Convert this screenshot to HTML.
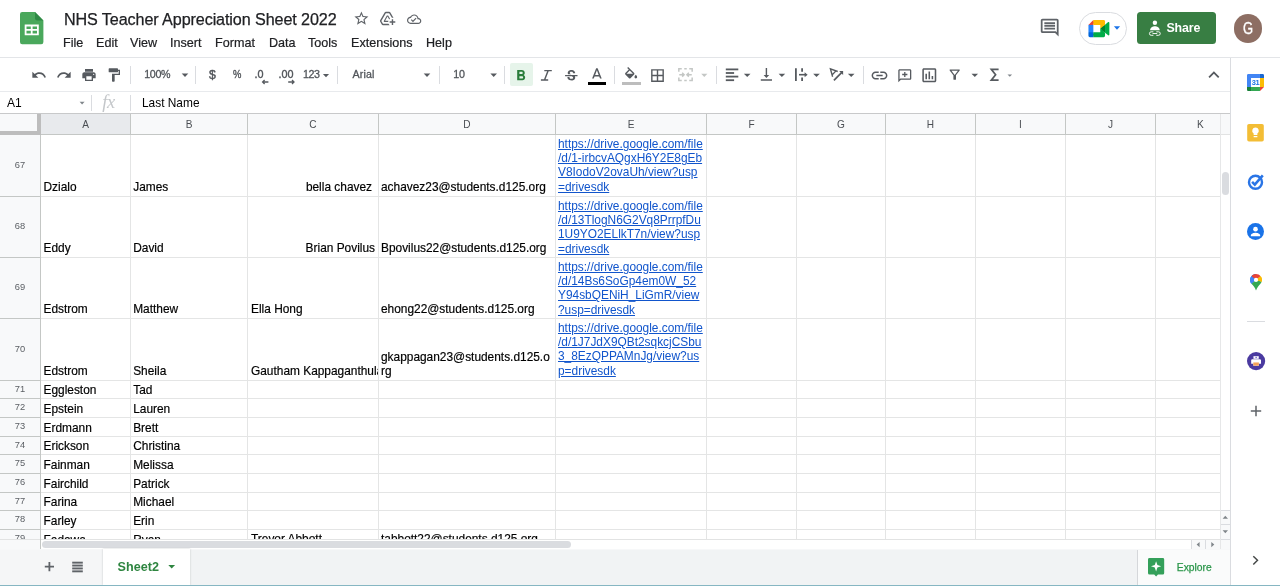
<!DOCTYPE html>
<html><head><meta charset="utf-8"><title>NHS Teacher Appreciation Sheet 2022</title>
<style>
*{box-sizing:border-box;margin:0;padding:0}
html,body{width:1280px;height:586px;overflow:hidden;background:#fff;font-family:"Liberation Sans",sans-serif;color:#000}
.a{position:absolute}
svg{position:absolute;overflow:visible}
#title{-webkit-text-stroke:0.250px #202124;left:64px;top:9px;font-size:16.15px;color:#202124;letter-spacing:-0.1px;white-space:nowrap;line-height:20px}
.menu{-webkit-text-stroke:0.200px #202124;top:35px;font-size:12.6px;color:#202124;line-height:16px;white-space:nowrap}
.hl{background:#e3e5e8;height:1px}
.tbtxt{font-size:11px;color:#4d5156;line-height:14px;top:67.0px;white-space:nowrap}
.tb2{-webkit-text-stroke:0.3px #565a5f}
.sep{width:1px;height:18px;top:66px;background:#dadce0}
.ch{top:114px;height:20px;background:#f8f9fa;border-right:1px solid #c4c7c5;font-size:10.100px;color:#4a4e53;text-align:center;line-height:22.400px}
.rh{left:0;width:40px;background:#f8f9fa;font-size:9.300px;color:#5a5e63;text-align:center}
.vl{width:1px;background:#e4e5e5;top:135px;height:404px}
.rl{height:1px;background:#e4e5e5;left:41px;width:1179px}
.c{font-size:11.9px;line-height:14px;white-space:nowrap;color:#000;-webkit-text-stroke:0.180px #000}
.lk{font-size:11.9px;line-height:14.2px;color:#1155cc;text-decoration:underline;white-space:nowrap}
</style></head><body><div id="root" style="position:absolute;left:0;top:0;width:1280px;height:586px;overflow:hidden;will-change:transform">
<!-- HEADER -->
<div id="hdr" class="a" style="left:0;top:0;width:1280px;height:57px;background:#fff"></div>
<svg style="left:20.2px;top:12.2px" width="23.4" height="32.3" viewBox="0 0 23.400 32.300">
<path d="M2.200 0H15l8.400 8.400V30.100a2.200 2.200 0 0 1-2.200 2.200H2.200A2.200 2.200 0 0 1 0 30.100V2.200A2.200 2.200 0 0 1 2.200 0z" fill="#4aa85c"/>
<path d="M15 0l8.400 8.400H17.200A2.200 2.200 0 0 1 15 6.200z" fill="#2f8a45"/>
<path d="M4.700 12.600H18.800V23.300H4.700zM6.500 14.400v2.700h4.300v-2.700zM12.600 14.400v2.700H17v-2.700zM6.500 18.800v2.700h4.300v-2.700zM12.600 18.800v2.700H17v-2.700z" fill="#fff" fill-rule="evenodd"/>
</svg>
<svg style="left:352.50px;top:10.40px" width="16.8" height="16.8" viewBox="0 0 24 24" fill="#5f6368" ><path d="M22 9.240l-7.190-.62L12 2 9.190 8.630 2 9.240l5.460 4.730L5.820 21 12 17.270 18.180 21l-1.630-7.030L22 9.240zM12 15.400l-3.760 2.270 1-4.280-3.320-2.880 4.380-.38L12 6.100l1.710 4.040 4.380.38-3.320 2.880 1 4.280L12 15.400z"/></svg>
<svg style="left:379.30px;top:10.00px" width="17" height="17" viewBox="0 0 24 24" fill="#5f6368" ><path d="M20 21v-3h3v-2h-3v-3h-2v3h-3v2h3v3h2zm-4.970.5H5.660c-.72 0-1.380-.38-1.730-1L1.570 16.400c-.36-.62-.35-1.380.01-2L7.920 3.490c.36-.61 1.020-.99 1.730-.99h4.700c.71 0 1.370.38 1.730.99l4.480 7.710c-.5-.13-1.020-.2-1.560-.2-.28 0-.56.020-.83.060L14.350 4.500h-4.700L3.310 15.410l2.350 4.090h7.890c.35.780.86 1.450 1.480 2zM13.340 15c-.22.630-.34 1.300-.34 2H7.250l-.73-1.270 4.580-7.980h1.800l2.740 4.770c-.43.310-.82.660-1.170 1.050l-2.470-4.320-3.300 5.750h4.640z"/></svg>
<svg style="left:406.95px;top:11.80px" width="14.3" height="14.3" viewBox="0 0 24 24" fill="#5f6368" ><path d="M19.350 10.040C18.670 6.590 15.640 4 12 4 9.110 4 6.600 5.640 5.350 8.040 2.340 8.360 0 10.910 0 14c0 3.310 2.690 6 6 6h13c2.760 0 5-2.240 5-5 0-2.640-2.050-4.780-4.650-4.960zM19 18H6c-2.210 0-4-1.790-4-4s1.790-4 4-4h.71C7.370 7.690 9.480 6 12 6c3.040 0 5.500 2.460 5.500 5.500v.5H19c1.660 0 3 1.340 3 3s-1.340 3-3 3zm-9-3.820l-2.090-2.090L6.500 13.500 10 17l6.010-6.010-1.410-1.410z"/></svg>
<svg style="left:1039.30px;top:17.20px" width="21.4" height="21.4" viewBox="0 0 24 24" fill="#5f6368" ><path d="M21.990 4c0-1.100-.89-2-1.990-2H4c-1.100 0-2 .9-2 2v12c0 1.100.9 2 2 2h14l4 4-.01-18zM20 4v13.170L18.830 16H4V4h16zM6 12h12v2H6zm0-3h12v2H6zm0-3h12v2H6z"/></svg>
<div class="a" style="left:1079px;top:12px;width:48px;height:32.500px;border:1px solid #dadce0;border-radius:17px;background:#fff"></div>
<svg style="left:1088.200px;top:19.800px" width="21.800" height="17.200" viewBox="0 0 87.500 72">
<path fill="#00832d" d="M49.500 36l8.530 9.750 11.470 7.330 2-17.020-2-16.640-11.690 6.440z"/>
<path fill="#0066da" d="M0 51.500V66c0 3.315 2.685 6 6 6h14.500l3-10.960-3-9.540-9.950-3z"/>
<path fill="#e94235" d="M20.500 0L0 20.500l10.550 3 9.950-3 2.950-9.410z"/>
<path fill="#2684fc" d="M20.500 20.500H0v31h20.500z"/>
<path fill="#00ac47" d="M82.600 8.680L69.500 19.420v33.660l13.160 10.790c1.970 1.540 4.850.135 4.850-2.370V11c0-2.535-2.945-3.925-4.910-2.320zM49.500 36v15.500h-29V72h43c3.315 0 6-2.685 6-6V53.080z"/>
<path fill="#ffba00" d="M63.500 0h-43v20.500h29V36l20-16.570V6c0-3.315-2.685-6-6-6z"/>
</svg>
<svg style="left:0;top:0" width="1280" height="586" viewBox="0 0 1280 586"><path d="M1113.90 26.20h6.2l-3.1 3.6z" fill="#1a73e8"/></svg>
<div class="a" style="left:1137.200px;top:12.400px;width:78.500px;height:31.700px;border-radius:3.500px;background:#387e43"></div>
<svg style="left:0;top:0" width="1280" height="586" viewBox="0 0 1280 586"><circle cx="1154.900" cy="22.700" r="2.200" fill="#fff"/><path d="M1150.100 30.300c0-2.900 2.700-4.100 4.800-4.100s4.800 1.200 4.800 4.100z" fill="#fff"/><path d="M1153.400 31.800h-2.200a1.750 1.750 0 0 0 0 3.500h2.200M1156.300 31.800h2.200a1.750 1.750 0 0 1 0 3.500h-2.200M1152.500 33.550h4.700" fill="none" stroke="#fff" stroke-width="0.950"/></svg>
<div class="a" style="left:1166.500px;top:19.500px;font-size:12.400px;line-height:16px;font-weight:bold;color:#fff;letter-spacing:-0.15px">Share</div>
<div class="a" style="left:1233.800px;top:14px;width:28.500px;height:28.500px;border-radius:50%;background:#8d6e63;color:#fff;font-size:15.800px;line-height:29.600px;text-align:center;-webkit-text-stroke:0.350px #fff"><span style="display:inline-block;transform:scaleX(0.820)">G</span></div>
<div id="title" class="a">NHS Teacher Appreciation Sheet 2022</div>
<div class="a menu" style="left:63px">File</div>
<div class="a menu" style="left:96px">Edit</div>
<div class="a menu" style="left:130px">View</div>
<div class="a menu" style="left:170px">Insert</div>
<div class="a menu" style="left:215px">Format</div>
<div class="a menu" style="left:269px">Data</div>
<div class="a menu" style="left:308px">Tools</div>
<div class="a menu" style="left:351px">Extensions</div>
<div class="a menu" style="left:426px">Help</div>
<div class="a hl" style="left:0;top:57px;width:1280px"></div>
<!-- TOOLBAR -->
<svg style="left:30.90px;top:67.00px" width="16" height="16" viewBox="0 0 24 24" fill="#565a5f" ><path d="M12.5 8c-2.65 0-5.05.99-6.9 2.6L2 7v9h9l-3.62-3.62c1.39-1.16 3.16-1.88 5.12-1.88 3.54 0 6.55 2.31 7.6 5.5l2.37-.78C21.08 11.03 17.15 8 12.5 8z"/></svg>
<svg style="left:55.90px;top:67.00px" width="16" height="16" viewBox="0 0 24 24" fill="#565a5f" ><path d="M18.4 10.6C16.55 8.99 14.15 8 11.5 8c-4.65 0-8.58 3.03-9.96 7.22L3.9 16c1.05-3.19 4.05-5.5 7.6-5.5 1.95 0 3.73.72 5.12 1.88L13 16h9V7l-3.6 3.6z"/></svg>
<svg style="left:80.90px;top:67.00px" width="16" height="16" viewBox="0 0 24 24" fill="#565a5f" ><path d="M19 8H5c-1.66 0-3 1.34-3 3v6h4v4h12v-4h4v-6c0-1.66-1.34-3-3-3zm-3 11H8v-5h8v5zm3-7c-.55 0-1-.45-1-1s.45-1 1-1 1 .45 1 1-.45 1-1 1zm-1-9H6v4h12V3z"/></svg>
<svg style="left:105.70px;top:67.00px" width="16" height="16" viewBox="0 0 24 24" fill="#565a5f" ><path d="M18 4V3c0-.55-.45-1-1-1H5c-.55 0-1 .45-1 1v4c0 .55.45 1 1 1h12c.55 0 1-.45 1-1V6h1v4H9v11c0 .55.45 1 1 1h2c.55 0 1-.45 1-1v-9h8V4h-3z"/></svg>
<div class="a sep" style="left:130px"></div>
<div class="a tbtxt tb2" style="left:144.3px;font-size:10.7px;letter-spacing:-0.4px">100%</div>
<svg style="left:0;top:0" width="1280" height="586" viewBox="0 0 1280 586"><path d="M181.70 73.50h6.6l-3.3 3.4z" fill="#565a5f"/></svg>
<div class="a sep" style="left:195px"></div>
<div class="a tbtxt tb2" style="left:209px;font-size:12.2px;top:67.5px;-webkit-text-stroke:0.45px #565a5f">$</div>
<div class="a tbtxt tb2" style="left:233px;font-size:11.2px;top:67.0px;transform:scaleX(0.84);transform-origin:0 0;-webkit-text-stroke:0.4px #565a5f">%</div>
<div class="a tbtxt tb2" style="left:254.6px;font-size:10.8px;top:67.0px;-webkit-text-stroke:0.4px #565a5f">.0</div>
<div class="a tbtxt tb2" style="left:278.5px;font-size:10.8px;top:67.0px;-webkit-text-stroke:0.4px #565a5f">.00</div>
<svg style="left:0;top:0" width="1280" height="586" viewBox="0 0 1280 586" fill="none" stroke="#565a5f" stroke-width="1.300"><path d="M268.4 82H262.6M264.6 80l-2 2 2 2"/><path d="M288.2 82H294M292 80l2 2-2 2"/></svg>
<div class="a tbtxt tb2" style="left:303px;font-size:10.7px;letter-spacing:-0.45px">123</div>
<svg style="left:0;top:0" width="1280" height="586" viewBox="0 0 1280 586"><path d="M322.90 74.05h6.2l-3.1 3.1z" fill="#565a5f"/></svg>
<div class="a sep" style="left:337px"></div>
<div class="a tbtxt tb2" style="left:352.5px;font-size:10.7px;letter-spacing:0.12px">Arial</div>
<svg style="left:0;top:0" width="1280" height="586" viewBox="0 0 1280 586"><path d="M423.70 73.50h6.6l-3.3 3.4z" fill="#565a5f"/></svg>
<div class="a sep" style="left:439px"></div>
<div class="a tbtxt tb2" style="left:453.3px;font-size:10.7px;letter-spacing:-0.2px">10</div>
<svg style="left:0;top:0" width="1280" height="586" viewBox="0 0 1280 586"><path d="M490.40 73.50h6.6l-3.3 3.4z" fill="#565a5f"/></svg>
<div class="a sep" style="left:504px"></div>
<div class="a" style="left:510px;top:63px;width:23px;height:23px;border-radius:2px;background:#e6f4ea"></div>
<svg style="left:512.00px;top:67.10px" width="17.8" height="17.8" viewBox="0 0 24 24" fill="#2a7d3b" ><path d="M15.6 10.79c.97-.67 1.65-1.77 1.65-2.79 0-2.26-1.75-4-4-4H7v14h7.04c2.09 0 3.71-1.7 3.71-3.79 0-1.52-.86-2.82-2.15-3.42zM10 6.500h3c.83 0 1.500.67 1.500 1.500s-.67 1.500-1.500 1.500h-3v-3zm3.500 9H10v-3h3.500c.83 0 1.500.67 1.500 1.500s-.67 1.500-1.500 1.500z"/></svg>
<svg style="left:0;top:0" width="1280" height="586" viewBox="0 0 1280 586" fill="none" stroke="#565a5f" stroke-width="1.450"><path d="M544.300 70.600H551.800M540.900 80H548.200M548.200 70.600L544.500 80"/></svg>
<svg style="left:562.80px;top:68.20px" width="16.6" height="16.6" viewBox="0 0 24 24" fill="#565a5f" ><path d="M7.24 8.75c-.26-.48-.39-1.03-.39-1.67 0-.61.13-1.16.4-1.67.26-.5.63-.93 1.11-1.29.48-.35 1.05-.63 1.7-.83.66-.19 1.39-.29 2.18-.29.81 0 1.54.11 2.21.34.66.22 1.23.54 1.69.94.47.4.83.88 1.08 1.43.25.55.38 1.15.38 1.81h-3.01c0-.31-.05-.59-.15-.85-.09-.27-.24-.49-.44-.68-.2-.19-.45-.33-.75-.44-.3-.1-.66-.16-1.06-.16-.39 0-.74.04-1.03.13-.29.09-.53.21-.72.36-.19.16-.34.34-.44.55-.1.21-.15.43-.15.66 0 .48.25.88.74 1.21.38.25.77.48 1.41.7H7.39c-.05-.08-.11-.17-.15-.25zM21 12v-2H3v2h9.620c.18.07.4.14.55.2.37.17.66.34.87.51.21.17.35.36.43.57.07.2.11.43.11.69 0 .23-.05.45-.14.66-.09.2-.23.38-.42.53-.19.15-.42.26-.71.35-.29.08-.63.13-1.010.13-.43 0-.83-.04-1.180-.13s-.66-.23-.91-.42c-.25-.19-.45-.44-.59-.75-.14-.31-.25-.76-.25-1.210H6.400c0 .55.08 1.130.24 1.580.16.45.37.85.65 1.210.28.35.6.66.98.92.37.26.78.48 1.220.65.44.17.9.3 1.380.39.48.08.96.13 1.440.13.8 0 1.530-.09 2.180-.28s1.210-.45 1.670-.79c.46-.34.82-.77 1.070-1.270s.38-1.070.38-1.710c0-.6-.1-1.140-.31-1.610-.05-.11-.11-.23-.17-.33H21z"/></svg>
<svg style="left:587.55px;top:65.50px" width="17.8" height="17.8" viewBox="0 0 24 24" fill="#565a5f" ><path d="M11 3L5.5 17h2.25l1.120-3h6.250l1.120 3h2.250L13 3h-2zm-1.380 9L12 5.670 14.380 12H9.620z"/></svg>
<div class="a" style="left:587.700px;top:82px;width:18.500px;height:3.300px;background:#000"></div>
<div class="a sep" style="left:614px"></div>
<svg style="left:623.20px;top:67.20px" width="16.2" height="16.2" viewBox="0 0 24 24" fill="#565a5f" ><path d="M16.56 8.94L7.62 0 6.21 1.41l2.38 2.38-5.15 5.15c-.59.59-.59 1.54 0 2.120l5.500 5.500c.29.29.68.44 1.060.44s.77-.15 1.060-.44l5.500-5.500c.59-.58.59-1.530 0-2.120zM5.210 10L10 5.210 14.790 10H5.210zM19 11.500s-2 2.170-2 3.500c0 1.100.9 2 2 2s2-.9 2-2c0-1.330-2-3.500-2-3.500z"/></svg>
<div class="a" style="left:622px;top:82px;width:19px;height:3.300px;background:#bdbdbd"></div>
<svg style="left:649.20px;top:66.50px" width="17" height="17" viewBox="0 0 24 24" fill="#565a5f" ><path d="M3 3v18h18V3H3zm8 16H5v-6h6v6zm0-8H5V5h6v6zm8 8h-6v-6h6v6zm0-8h-6V5h6v6z"/></svg>
<svg style="left:677.5px;top:68.4px" width="15" height="13.4" viewBox="0 0 18 16" fill="none" stroke="#c4c7c5" stroke-width="1.8"><path d="M1 4.500V1h3.500M7.500 1h3M13.500 1H17v3.500M1 11.500V15h3.500M7.500 15h3M13.500 15H17v-3.500M1.500 8H7M5 5.700L7.300 8 5 10.300M16.500 8H11M13 5.700L10.700 8 13 10.300"/></svg>
<svg style="left:0;top:0" width="1280" height="586" viewBox="0 0 1280 586"><path d="M701.20 73.85h6.2l-3.1 3.1z" fill="#c4c7c5"/></svg>
<div class="a sep" style="left:716px"></div>
<svg style="left:0;top:0" width="1280" height="586" viewBox="0 0 1280 586" fill="#565a5f"><rect x="725.8" y="68.500" width="12.5" height="1.800"/><rect x="725.8" y="72.100" width="8.300" height="1.800"/><rect x="725.8" y="75.700" width="12.5" height="1.800"/><rect x="725.8" y="79.300" width="8.300" height="1.800"/></svg>
<svg style="left:0;top:0" width="1280" height="586" viewBox="0 0 1280 586"><path d="M743.90 73.70h6.6l-3.3 3.4z" fill="#565a5f"/></svg>
<svg style="left:758.20px;top:66.20px" width="16.8" height="16.8" viewBox="0 0 24 24" fill="#565a5f" ><path d="M16 13h-3V3h-2v10H8l4 4 4-4zM4 19v2h16v-2H4z"/></svg>
<svg style="left:0;top:0" width="1280" height="586" viewBox="0 0 1280 586"><path d="M778.60 73.70h6.6l-3.3 3.4z" fill="#565a5f"/></svg>
<svg style="left:0;top:0" width="1280" height="586" viewBox="0 0 1280 586" fill="none" stroke="#565a5f" stroke-width="1.800"><path d="M795.900 68.300V80.900M802.100 68.300V71.800M802.100 77.400V80.900"/><path d="M799 74.700H805.500" stroke-width="1.600"/><path d="M804.600 72.200L807.600 74.700 804.600 77.200z" fill="#565a5f" stroke="none"/></svg>
<svg style="left:0;top:0" width="1280" height="586" viewBox="0 0 1280 586"><path d="M813.20 73.70h6.6l-3.3 3.4z" fill="#565a5f"/></svg>
<svg style="left:0;top:0" width="1280" height="586" viewBox="0 0 1280 586" fill="none" stroke="#565a5f" stroke-width="1.350"><path d="M837.700 71.500L830.400 68.800 832.600 76.700M836 70.900L832 75"/><path d="M833.900 80.300L841.600 72.700" stroke-width="1.700"/><path d="M839.200 71H843.100V74.900z" fill="#565a5f" stroke="none"/></svg>
<svg style="left:0;top:0" width="1280" height="586" viewBox="0 0 1280 586"><path d="M847.90 73.70h6.6l-3.3 3.4z" fill="#565a5f"/></svg>
<div class="a sep" style="left:863px"></div>
<svg style="left:870.10px;top:65.70px" width="19" height="19" viewBox="0 0 24 24" fill="#565a5f" ><path d="M3.9 12c0-1.710 1.390-3.100 3.100-3.100h4V7H7c-2.760 0-5 2.240-5 5s2.240 5 5 5h4v-1.900H7c-1.710 0-3.100-1.390-3.100-3.100zM8 13h8v-2H8v2zm9-6h-4v1.900h4c1.710 0 3.100 1.390 3.100 3.100s-1.390 3.100-3.100 3.100h-4V17h4c2.760 0 5-2.240 5-5s-2.240-5-5-5z"/></svg>
<svg style="left:896.60px;top:68.00px" width="15.6" height="15.6" viewBox="0 0 24 24" fill="#565a5f" ><path d="M20 2H4c-1.100 0-2 .9-2 2v18l4-4h14c1.100 0 2-.9 2-2V4c0-1.100-.9-2-2-2zm0 14H5.170L4 17.170V4h16v12zm-9-2h2v-3h3V9h-3V6h-2v3H8v2h3z"/></svg>
<svg style="left:919.90px;top:65.70px" width="18.6" height="18.6" viewBox="0 0 24 24" fill="#565a5f" ><path d="M9 17H7v-7h2v7zm4 0h-2V7h2v10zm4 0h-2v-4h2v4zm2 2H5V5h14v14zm0-16H5c-1.100 0-2 .9-2 2v14c0 1.100.9 2 2 2h14c1.100 0 2-.9 2-2V5c0-1.100-.9-2-2-2z"/></svg>
<svg style="left:947.20px;top:67.30px" width="15.4" height="15.4" viewBox="0 0 24 24" fill="#565a5f" ><path d="M7 6h10l-5.010 6.300L7 6zm-2.750-.39C6.270 8.200 10 13 10 13v6c0 .55.45 1 1 1h2c.55 0 1-.45 1-1v-6s3.720-4.800 5.740-7.390c.51-.66.04-1.610-.79-1.610H5.040c-.83 0-1.300.95-.79 1.610z"/></svg>
<svg style="left:0;top:0" width="1280" height="586" viewBox="0 0 1280 586"><path d="M971.50 73.70h6.6l-3.3 3.4z" fill="#565a5f"/></svg>
<svg style="left:0;top:0" width="1280" height="586" viewBox="0 0 1280 586" fill="none" stroke="#565a5f" stroke-width="1.700" stroke-linejoin="miter"><path d="M998.600 69.300H991.300L995.600 74.700 991.300 80.100H998.600"/></svg>
<svg style="left:0;top:0" width="1280" height="586" viewBox="0 0 1280 586"><path d="M1007.50 74.45h4.6l-2.3 2.3z" fill="#80868b"/></svg>
<svg style="left:1203.20px;top:63.80px" width="21.8" height="21.8" viewBox="0 0 24 24" fill="#565a5f" ><path d="M12 8l-6 6 1.410 1.410L12 10.830l4.590 4.590L18 14z"/></svg>
<div class="a hl" style="left:0;top:91px;width:1231px;background:#e8eaed"></div>
<!-- FORMULA BAR -->
<div class="a" style="left:7px;top:95.800px;font-size:12px;line-height:15px;color:#000">A1</div>
<svg style="left:0;top:0" width="1280" height="586" viewBox="0 0 1280 586"><path d="M79.600 101.800h5l-2.500 2.600z" fill="#80868b"/></svg>
<div class="a" style="left:102.300px;top:92.500px;font-family:'Liberation Serif',serif;font-style:italic;font-size:18.500px;line-height:18px;color:#c4c7ca;letter-spacing:-0.5px">fx</div>
<div class="a" style="left:142px;top:95.800px;font-size:11.9px;line-height:15px;color:#000">Last Name</div>
<div class="a" style="left:91px;top:95px;width:1px;height:16px;background:#dadce0"></div>
<div class="a" style="left:130px;top:95px;width:1px;height:16px;background:#dadce0"></div>
<div class="a" style="left:0;top:113px;width:1231px;height:1px;background:#c8c9ca"></div>
<!-- GRID -->
<div class="a" style="left:0;top:114px;width:1220px;height:20px;background:#f8f9fa"></div>
<div class="a ch" style="left:41px;width:90px;background:#e8eaed">A</div>
<div class="a ch" style="left:131px;width:117px;background:#f8f9fa">B</div>
<div class="a ch" style="left:248px;width:131px;background:#f8f9fa">C</div>
<div class="a ch" style="left:379px;width:177px;background:#f8f9fa">D</div>
<div class="a ch" style="left:556px;width:151px;background:#f8f9fa">E</div>
<div class="a ch" style="left:707px;width:90px;background:#f8f9fa">F</div>
<div class="a ch" style="left:797px;width:89px;background:#f8f9fa">G</div>
<div class="a ch" style="left:886px;width:90px;background:#f8f9fa">H</div>
<div class="a ch" style="left:976px;width:90px;background:#f8f9fa">I</div>
<div class="a ch" style="left:1066px;width:90px;background:#f8f9fa">J</div>
<div class="a ch" style="left:1156px;width:64px;background:#f8f9fa;border-right:none;text-align:left;padding-left:41px">K</div>
<div class="a" style="left:41px;top:134px;width:1179px;height:1px;background:#c4c7c5"></div>
<div class="a" style="left:0;top:135px;width:40px;height:404px;background:#f8f9fa"></div>
<div class="a vl" style="left:130px"></div>
<div class="a vl" style="left:247px"></div>
<div class="a vl" style="left:378px"></div>
<div class="a vl" style="left:555px"></div>
<div class="a vl" style="left:706px"></div>
<div class="a vl" style="left:796px"></div>
<div class="a vl" style="left:885px"></div>
<div class="a vl" style="left:975px"></div>
<div class="a vl" style="left:1065px"></div>
<div class="a vl" style="left:1155px"></div>
<div class="a" style="left:40px;top:135px;width:1px;height:404px;background:#c4c7c5"></div>
<div class="a rl" style="top:196px"></div>
<div class="a" style="left:0;top:196px;width:40px;height:1px;background:#c4c7c5"></div>
<div class="a rl" style="top:257px"></div>
<div class="a" style="left:0;top:257px;width:40px;height:1px;background:#c4c7c5"></div>
<div class="a rl" style="top:318px"></div>
<div class="a" style="left:0;top:318px;width:40px;height:1px;background:#c4c7c5"></div>
<div class="a rl" style="top:380px"></div>
<div class="a" style="left:0;top:380px;width:40px;height:1px;background:#c4c7c5"></div>
<div class="a rl" style="top:398px"></div>
<div class="a" style="left:0;top:398px;width:40px;height:1px;background:#c4c7c5"></div>
<div class="a rl" style="top:417px"></div>
<div class="a" style="left:0;top:417px;width:40px;height:1px;background:#c4c7c5"></div>
<div class="a rl" style="top:436px"></div>
<div class="a" style="left:0;top:436px;width:40px;height:1px;background:#c4c7c5"></div>
<div class="a rl" style="top:454px"></div>
<div class="a" style="left:0;top:454px;width:40px;height:1px;background:#c4c7c5"></div>
<div class="a rl" style="top:473px"></div>
<div class="a" style="left:0;top:473px;width:40px;height:1px;background:#c4c7c5"></div>
<div class="a rl" style="top:492px"></div>
<div class="a" style="left:0;top:492px;width:40px;height:1px;background:#c4c7c5"></div>
<div class="a rl" style="top:510px"></div>
<div class="a" style="left:0;top:510px;width:40px;height:1px;background:#c4c7c5"></div>
<div class="a rl" style="top:529px"></div>
<div class="a" style="left:0;top:529px;width:40px;height:1px;background:#c4c7c5"></div>
<div class="a rh" style="top:135px;height:61px;line-height:60.6px">67</div>
<div class="a rh" style="top:197px;height:60px;line-height:59.6px">68</div>
<div class="a rh" style="top:258px;height:60px;line-height:59.6px">69</div>
<div class="a rh" style="top:319px;height:61px;line-height:60.6px">70</div>
<div class="a rh" style="top:381px;height:17px;line-height:16.6px">71</div>
<div class="a rh" style="top:399px;height:18px;line-height:17.6px">72</div>
<div class="a rh" style="top:418px;height:18px;line-height:17.6px">73</div>
<div class="a rh" style="top:437px;height:17px;line-height:16.6px">74</div>
<div class="a rh" style="top:455px;height:18px;line-height:17.6px">75</div>
<div class="a rh" style="top:474px;height:18px;line-height:17.6px">76</div>
<div class="a rh" style="top:493px;height:17px;line-height:16.6px">77</div>
<div class="a rh" style="top:511px;height:18px;line-height:17.6px">78</div>
<div class="a rh" style="top:530px;height:18px;line-height:17.6px">79</div>
<div class="a" style="left:37px;top:114px;width:4px;height:21px;background:#bdbdbd"></div>
<div class="a" style="left:0;top:131px;width:41px;height:4px;background:#bdbdbd"></div>
<div class="a c" style="left:43.5px;top:180px;">Dzialo</div>
<div class="a c" style="left:133.2px;top:180px;">James</div>
<div class="a c" style="left:43.5px;top:241px;">Eddy</div>
<div class="a c" style="left:133.2px;top:241px;">David</div>
<div class="a c" style="left:43.5px;top:302px;">Edstrom</div>
<div class="a c" style="left:133.2px;top:302px;">Matthew</div>
<div class="a c" style="left:43.5px;top:364px;">Edstrom</div>
<div class="a c" style="left:133.2px;top:364px;">Sheila</div>
<div class="a c" style="left:43.5px;top:383px;">Eggleston</div>
<div class="a c" style="left:133.2px;top:383px;">Tad</div>
<div class="a c" style="left:43.5px;top:402px;">Epstein</div>
<div class="a c" style="left:133.2px;top:402px;">Lauren</div>
<div class="a c" style="left:43.5px;top:421px;">Erdmann</div>
<div class="a c" style="left:133.2px;top:421px;">Brett</div>
<div class="a c" style="left:43.5px;top:439px;">Erickson</div>
<div class="a c" style="left:133.2px;top:439px;">Christina</div>
<div class="a c" style="left:43.5px;top:458px;">Fainman</div>
<div class="a c" style="left:133.2px;top:458px;">Melissa</div>
<div class="a c" style="left:43.5px;top:477px;">Fairchild</div>
<div class="a c" style="left:133.2px;top:477px;">Patrick</div>
<div class="a c" style="left:43.5px;top:495px;">Farina</div>
<div class="a c" style="left:133.2px;top:495px;">Michael</div>
<div class="a c" style="left:43.5px;top:514px;">Farley</div>
<div class="a c" style="left:133.2px;top:514px;">Erin</div>
<div class="a c" style="left:43.5px;top:533px;">Fadawa</div>
<div class="a c" style="left:133.2px;top:533px;">Ryan</div>
<div class="a c" style="left:0px;top:180px;left:auto;right:908px">bella chavez</div>
<div class="a c" style="left:0px;top:241px;left:auto;right:905px">Brian Povilus</div>
<div class="a c" style="left:251px;top:302px;">Ella Hong</div>
<div class="a c" style="left:251px;top:364px;width:127px;overflow:hidden">Gautham Kappaganthula</div>
<div class="a c" style="left:251px;top:532px;">Trevor Abbott</div>
<div class="a c" style="left:381px;top:180px;">achavez23@students.d125.org</div>
<div class="a c" style="left:381px;top:241px;">Bpovilus22@students.d125.org</div>
<div class="a c" style="left:381px;top:302px;">ehong22@students.d125.org</div>
<div class="a c" style="left:381px;top:350px;line-height:14.2px">gkappagan23@students.d125.o<br>rg</div>
<div class="a c" style="left:381px;top:532px;">tabbott22@students.d125.org</div>
<div class="a lk" style="left:558px;top:137px">https://drive.google.com/file<br>/d/1-irbcvAQgxH6Y2E8gEb<br>V8IodoV2ovaUh/view?usp<br>=drivesdk</div>
<div class="a lk" style="left:558px;top:199px">https://drive.google.com/file<br>/d/13TlogN6G2Vq8PrrpfDu<br>1U9YO2ELlkT7n/view?usp<br>=drivesdk</div>
<div class="a lk" style="left:558px;top:260px">https://drive.google.com/file<br>/d/14Bs6SoGp4em0W_52<br>Y94sbQENiH_LiGmR/view<br>?usp=drivesdk</div>
<div class="a lk" style="left:558px;top:321px">https://drive.google.com/file<br>/d/1J7JdX9QBt2sqkcjCSbu<br>3_8EzQPPAMnJg/view?us<br>p=drivesdk</div>
<div class="a" style="left:0;top:539px;width:1231px;height:10px;background:#fff"></div>
<div class="a" style="left:0;top:539px;width:40px;height:10px;background:#f8f9fa"></div>
<div class="a" style="left:0;top:539px;width:1231px;height:1px;background:#e2e3e3"></div>
<div class="a" style="left:40px;top:539px;width:1px;height:10px;background:#c4c7c5"></div>
<div class="a" style="left:41.500px;top:541px;width:529.500px;height:7.300px;border-radius:4px;background:#dadce0"></div>
<!-- SIDE -->
<div class="a" style="left:1231px;top:58px;width:49px;height:527px;background:#fff"></div>
<div class="a" style="left:1230px;top:58px;width:1px;height:527px;background:#dadce0"></div>
<svg style="left:1247.200px;top:74.100px" width="17" height="17" viewBox="0 0 200 200">
<path fill="#fff" d="M152.600 47.400H47.400v105.200h105.200z"/>
<path fill="#ea4335" d="M152.600 200L200 152.600h-47.400z"/>
<path fill="#fbbc04" d="M200 47.400h-47.400v105.200H200z"/>
<path fill="#34a853" d="M152.600 152.600H47.400V200h105.200z"/>
<path fill="#188038" d="M0 152.600v31.600C0 192.900 7.100 200 15.800 200h31.600v-47.400z"/>
<path fill="#1967d2" d="M200 47.400V15.800C200 7.100 192.900 0 184.200 0h-31.600v47.400z"/>
<path fill="#4285f4" d="M152.600 0H15.800C7.100 0 0 7.100 0 15.800v136.800h47.400V47.400h105.200z"/>
<text x="100" y="128" font-family="Liberation Sans" font-weight="bold" font-size="88" text-anchor="middle" fill="#1a73e8" letter-spacing="-4">31</text>
</svg>
<svg style="left:1247.400px;top:123.900px" width="17" height="17.400" viewBox="0 0 17 17.800">
<rect width="17" height="17.800" rx="1.800" fill="#f3bd35"/>
<path d="M8.500 3.600a3.400 3.400 0 0 0-1.900 6.200v1.500h3.800V9.800A3.400 3.400 0 0 0 8.500 3.600zM6.600 12.300h3.800v1.300H6.600z" fill="#fff"/>
</svg>
<svg style="left:1247.300px;top:173px" width="17" height="17" viewBox="0 0 24 24">
<circle cx="12" cy="13" r="9.200" fill="none" stroke="#2a75e6" stroke-width="3.400"/>
<path d="M7.200 12.600l3.800 3.800L22.300 3.400" fill="none" stroke="#2a75e6" stroke-width="3.600"/>
<path d="M14 2.400L24 2l-2 10z" fill="#fff" opacity="0"/>
</svg>
<svg style="left:1247.300px;top:223px" width="17" height="17" viewBox="0 0 24 24">
<circle cx="12" cy="12" r="12" fill="#1a73e8"/>
<circle cx="12" cy="8.700" r="3.300" fill="#fff"/>
<path d="M5.400 17.600c0-2.700 4.400-3.900 6.600-3.900s6.600 1.200 6.600 3.900v1.100H5.400z" fill="#fff"/>
</svg>
<svg style="left:1250px;top:273.600px" width="12" height="16.400" viewBox="0 0 24 33">
<path d="M12 0C5.400 0 0 5.400 0 12c0 3 1.100 5.700 2.900 7.800L12 12z" fill="#1a73e8"/>
<path d="M12 0c3.700 0 7 1.700 9.200 4.300L12 12 2.800 4.300C5 1.700 8.300 0 12 0z" fill="#ea4335"/>
<path d="M2.800 4.300L12 12 2.900 19.800C1.100 17.700 0 15 0 12c0-2.900 1-5.600 2.800-7.700z" fill="#4285f4"/>
<path d="M21.200 4.300C23 6.400 24 9.100 24 12c0 1.300-.2 2.500-.6 3.700L12 12z" fill="#fbbc04"/>
<path d="M2.900 19.800C6 23.400 9.800 27 12 33c2.200-6 5.500-9.300 8.600-13 1.300-1.500 2.300-2.900 2.800-4.300L12 12z" fill="#34a853"/>
<path d="M12 12l9.200-7.700C23 6.400 24 9.100 24 12c0 1.300-.2 2.500-.6 3.700z" fill="#fbbc04"/>
<circle cx="12" cy="12" r="4.300" fill="#fff"/>
</svg>
<div class="a" style="left:1247px;top:321px;width:17.500px;height:1px;background:#dadce0"></div>
<svg style="left:1247px;top:351.800px" width="18.200" height="18.200" viewBox="0 0 24 24">
<circle cx="12" cy="12" r="12" fill="#4a3aa0"/>
<path d="M7 9.500h10a1.500 1.500 0 0 1 1.500 1.500v4.500h-2.800V18H8.300v-2.500H5.500V11A1.500 1.500 0 0 1 7 9.500z" fill="#fff"/>
<path d="M8.500 5.500h7V9h-7z" fill="#fff"/>
<path d="M8.300 13.800h7.400V18H8.300z" fill="#f4a259"/>
<path d="M11 6.300h2.200v1.800H11z" fill="#8c7fd6"/>
</svg>
<svg style="left:0;top:0" width="1280" height="586" viewBox="0 0 1280 586" fill="none" stroke="#5f6368" stroke-width="1.500"><path d="M1250.800 411H1261.200M1256 405.800V416.200"/></svg>
<svg style="left:0;top:0" width="1280" height="586" viewBox="0 0 1280 586" fill="none" stroke="#444746" stroke-width="1.450"><path d="M1253.300 556.200L1257.500 560.300 1253.300 564.400"/></svg>
<!-- BOTTOM -->
<div class="a" style="left:1220px;top:114px;width:10px;height:21px;background:#f8f9fa"></div>
<div class="a" style="left:1220px;top:135px;width:10px;height:375px;background:#fff"></div>
<div class="a" style="left:1220px;top:510px;width:10px;height:40px;background:#f8f9fa"></div>
<div class="a" style="left:1220px;top:114px;width:1px;height:435px;background:#e6e7e8"></div>
<div class="a" style="left:1221px;top:134px;width:9px;height:1px;background:#e2e3e3"></div>
<div class="a" style="left:1221px;top:510px;width:9px;height:1px;background:#dadce0"></div>
<div class="a" style="left:1221px;top:524px;width:9px;height:1px;background:#dadce0"></div>
<div class="a" style="left:1221px;top:539px;width:9px;height:1px;background:#dadce0"></div>
<div class="a" style="left:1221.500px;top:172px;width:7.500px;height:23px;border-radius:4px;background:#dadce0"></div>
<div class="a" style="left:1191px;top:540px;width:29px;height:9px;background:#f8f9fa"></div>
<div class="a" style="left:1191px;top:540px;width:1px;height:9px;background:#dadce0"></div>
<div class="a" style="left:1205px;top:540px;width:1px;height:9px;background:#dadce0"></div>
<svg style="left:0;top:0" width="1280" height="586" viewBox="0 0 1280 586" fill="#80868b"><path d="M1222.600 518.800h5.400l-2.700-3zM1222.600 530.300h5.400l-2.700 3z"/><path d="M1199.600 541.900v5.400l-3-2.700zM1211.300 541.900v5.400l3-2.700z"/></svg>
<div class="a" style="left:0;top:549px;width:1230px;height:36px;background:#f1f3f4"></div>
<div class="a" style="left:0;top:549px;width:1230px;height:1px;background:#f7f8f9"></div>
<div class="a" style="left:0;top:550px;width:103px;height:35px;background:#f5f6f7"></div>
<svg style="left:0;top:0" width="1280" height="586" viewBox="0 0 1280 586" fill="none" stroke="#5f6368" stroke-width="1.800"><path d="M44.800 566.600H54M49.400 562V571.200"/></svg>
<svg style="left:0;top:0" width="1280" height="586" viewBox="0 0 1280 586" fill="#5f6368"><rect x="72.200" y="561.700" width="10.600" height="1.900"/><rect x="72.200" y="564.600" width="10.600" height="1.900"/><rect x="72.200" y="567.500" width="10.600" height="1.900"/><rect x="72.200" y="570.400" width="10.600" height="1.900"/></svg>
<div class="a" style="left:103px;top:549px;width:87px;height:36px;background:#fff;box-shadow:0 0 2px rgba(60,64,67,.25)"></div>
<div class="a" style="left:117.500px;top:558.500px;font-size:12.600px;line-height:16px;font-weight:bold;color:#2e8540;letter-spacing:0.05px">Sheet2</div>
<svg style="left:0;top:0" width="1280" height="586" viewBox="0 0 1280 586"><path d="M168.30 565.00h6.8l-3.4 3.6z" fill="#2e8540"/></svg>
<div class="a" style="left:1137px;top:550px;width:93px;height:35px;box-sizing:border-box;background:#fafbfb;border-left:1px solid #d5d7da"></div>
<svg style="left:1148px;top:558.200px" width="16.200" height="18.600" viewBox="0 0 16.200 18.600">
<path d="M1.500 0h13.200a1.500 1.500 0 0 1 1.500 1.500v13.600a1.500 1.500 0 0 1-1.500 1.500H10L8.100 18.500 6.200 16.600H1.500A1.500 1.500 0 0 1 0 15.100V1.500A1.500 1.500 0 0 1 1.500 0z" fill="#34a05a"/>
<path d="M8.100 3.200l1.300 3.800 3.800 1.300-3.800 1.300-1.300 3.800-1.300-3.800L3 8.300 6.800 7z" fill="#fff"/>
</svg>
<div class="a" style="left:1176.800px;top:560.500px;font-size:10.300px;line-height:14px;color:#2a964a;-webkit-text-stroke:0.250px #2a964a">Explore</div>
<div class="a" style="left:0;top:585px;width:1280px;height:1px;background:#86b6c2"></div>
</div></body></html>
